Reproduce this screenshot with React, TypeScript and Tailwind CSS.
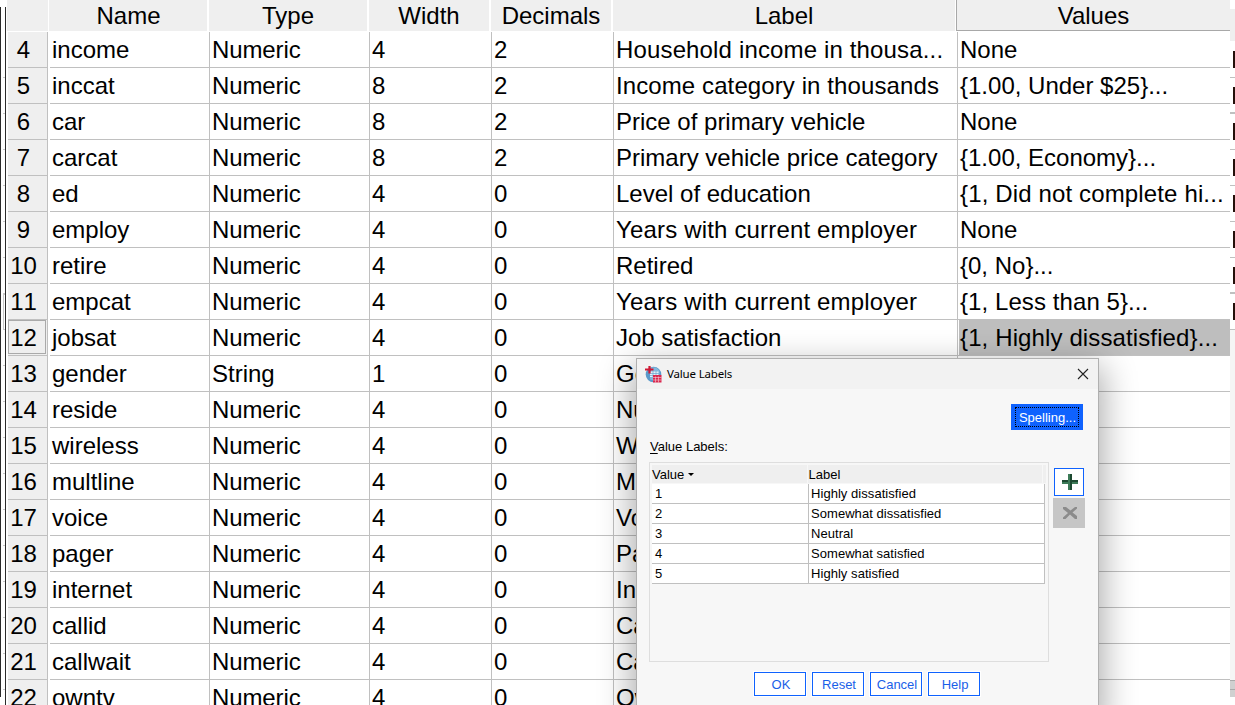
import React from "react";

type Row = [number, string, string, number, number, string, string];

const rows: Row[] = [
  [4, "income", "Numeric", 4, 2, "Household income in thousa...", "None"],
  [5, "inccat", "Numeric", 8, 2, "Income category in thousands", "{1.00, Under $25}..."],
  [6, "car", "Numeric", 8, 2, "Price of primary vehicle", "None"],
  [7, "carcat", "Numeric", 8, 2, "Primary vehicle price category", "{1.00, Economy}..."],
  [8, "ed", "Numeric", 4, 0, "Level of education", "{1, Did not complete hi..."],
  [9, "employ", "Numeric", 4, 0, "Years with current employer", "None"],
  [10, "retire", "Numeric", 4, 0, "Retired", "{0, No}..."],
  [11, "empcat", "Numeric", 4, 0, "Years with current employer", "{1, Less than 5}..."],
  [12, "jobsat", "Numeric", 4, 0, "Job satisfaction", "{1, Highly dissatisfied}..."],
  [13, "gender", "String", 1, 0, "Ge", ""],
  [14, "reside", "Numeric", 4, 0, "Nu", ""],
  [15, "wireless", "Numeric", 4, 0, "Wi", ""],
  [16, "multline", "Numeric", 4, 0, "Mu", ""],
  [17, "voice", "Numeric", 4, 0, "Vo", ""],
  [18, "pager", "Numeric", 4, 0, "Pa", ""],
  [19, "internet", "Numeric", 4, 0, "Int", ""],
  [20, "callid", "Numeric", 4, 0, "Ca", ""],
  [21, "callwait", "Numeric", 4, 0, "Ca", ""],
  [22, "owntv", "Numeric", 4, 0, "Ow", ""],
];

const tracking: Record<string, string> = {
  "Household income in thousa...": "tracking-[0.15px]",
  "Income category in thousands": "tracking-[0.1px]",
  "Years with current employer": "tracking-[0.17px]",
  "{1, Did not complete hi...": "tracking-[0.14px]",
  "{1, Highly dissatisfied}...": "tracking-[0.12px]",
  "{1, Less than 5}...": "tracking-[0.08px]",
  Numeric: "tracking-[-0.1px]",
};

const labels = ["Highly dissatisfied", "Somewhat dissatisfied", "Neutral", "Somewhat satisfied", "Highly satisfied"];

const grid = "grid grid-cols-[42px_159px_160px_122px_122px_344px_273px]";

function Header({ children }: { children?: React.ReactNode }) {
  return <div className="mr-0.5 h-[31px] overflow-hidden bg-[#efefef] text-center leading-[32px]">{children}</div>;
}

function Cell({ text, selected }: { text: string | number; selected?: boolean }) {
  return (
    <div
      className={
        "overflow-hidden whitespace-nowrap border-b border-l border-[#c0c0c0] leading-[35px] " +
        (tracking[text] ?? "")
      }
    >
      <div className={selected ? "ml-px bg-[#bebebe] pl-px" : "pl-0.5"}>{text}</div>
    </div>
  );
}

function DialogButton({ children }: { children: React.ReactNode }) {
  return (
    <button className="h-6 w-[52px] border border-[#0f62fe] bg-white pl-0.5 text-center leading-[23px] text-[#1a5fe8] outline outline-white">
      {children}
    </button>
  );
}

function AppIcon() {
  return (
    <svg width="17" height="17" viewBox="0 0 17 17">
      <circle cx="8.5" cy="8.5" r="7.8" fill="#5b9acb" />
      <path d="M6 1.500h5l3.500 3v4H9v6l-4-1z" fill="#82b8dd" />
      <path d="M5 5.500h8.500V11H5z" fill="#e4f0f8" />
      <path d="M5 7.500h9M5 9.500h9M8 5v6M11 5v6" stroke="#6aa4cf" strokeWidth=".7" />
      <path d="M4.500 0v7.500M0 3.500h8.500" stroke="#cf1834" strokeWidth="2.200" />
      <path d="M8 9h8.500v7.500H8z" fill="#d9274e" />
      <path d="M8 11.500h8.500M8 14h8.500M10.500 10.500v6M13.500 10.500v6" stroke="#f7ccd6" strokeWidth=".6" />
    </svg>
  );
}

function Dialog() {
  return (
    <div className="absolute left-[636px] top-[358px] h-[360px] w-[463px] border border-[#b0b0b0] bg-[#f7f7f7] text-[13px] text-black shadow-[0_12px_32px_4px_rgba(0,0,0,0.33)]">
      <div className="flex h-[30px] items-center bg-[#f2f2f2] pl-2 pr-[9px]">
        <AppIcon />
        <span className="ml-[5px] flex-1 font-['Noto_Sans',sans-serif] text-[11.500px] tracking-[-0.170px]">Value Labels</span>
        <svg width="12" height="12" viewBox="0 0 12 12" stroke="#222" strokeWidth="1.1">
          <path d="M1 1l10 10M11 1L1 11" />
        </svg>
      </div>
      <div className="flex justify-end pr-[15px] pt-[15px]">
        <button className="h-[26px] w-[72px] bg-[#0f62fe] px-1 py-[3px] text-white">
          <span className="flex h-5 items-center justify-center whitespace-nowrap border border-dotted border-black pl-px pt-px">Spelling...</span>
        </button>
      </div>
      <div className="ml-[13px] mt-[8px] leading-[18px]">
        <span className="underline underline-offset-2">V</span>alue Labels:
      </div>
      <div className="ml-3 mt-1.5 flex">
        <div className="h-[200px] w-[400px] border border-[#dedede] p-0.5">
          <div className="mb-px flex h-[18px] gap-px leading-[19px]">
            <div className="flex w-[155px] items-center bg-[#efefef]">
              Value
              <svg className="ml-1" width="6" height="3" viewBox="0 0 6 3">
                <path d="M0 0h6L3 3z" />
              </svg>
            </div>
            <div className="w-[235px] bg-[#efefef] pl-px">Label</div>
            <div className="w-[3px] bg-[#efefef]" />
          </div>
          {labels.map((label, i) => (
            <div key={label} className="flex h-5 w-[393px] border-b border-r border-[#c0c0c0] bg-white leading-[19px]">
              <div className="w-[156px] pl-[3px]">{i + 1}</div>
              <div className="flex-1 border-l border-[#c0c0c0] pl-0.5 tracking-[0.05px]">{label}</div>
            </div>
          ))}
        </div>
        <div className="ml-1 mt-1.5 flex flex-col items-center gap-0.5">
          <div className="grid h-7 w-[30px] place-items-center border border-[#0f62fe] bg-white pl-0.5">
            <svg width="16" height="16" viewBox="0 0 16 16">
              <path d="M6 0h4v6h6v4h-6v6H6v-6H0V6h6z" fill="#1c4931" />
              <path d="M6 0h2v16H6zM0 8h16v2H0z" fill="#3d7b58" />
              <path d="M8 0h2v16H8z" fill="#1c4931" />
            </svg>
          </div>
          <div className="grid h-[30px] w-8 place-items-center bg-[#c6c6c6] pl-0.5">
            <svg width="14" height="12" viewBox="0 0 14 12" fill="#8b8b8b">
              <path d="M0 0h3l4.500 3.500L12 0h2v1.500L9.500 5.500 14 9v3h-2L7 7.500 2.500 12H0v-1.500L5 6 0 2z" />
            </svg>
          </div>
        </div>
      </div>
      <div className="ml-[117px] flex gap-1.5 pt-[10px]">
        <DialogButton>OK</DialogButton>
        <DialogButton>Reset</DialogButton>
        <DialogButton>Cancel</DialogButton>
        <DialogButton>Help</DialogButton>
      </div>
    </div>
  );
}

export default function App() {
  return (
    <div className="relative flex h-[705px] w-[1235px] overflow-hidden bg-white font-['Liberation_Sans',Arial,sans-serif] text-[24px] text-black">
      <div className="mt-[7px] h-[690px] w-px shrink-0 bg-[#2a2a2a]" />
      <div className="flex w-[4px] shrink-0 flex-col">
        {rows.map((r) => (
          <div
            key={r[0]}
            className={
              "ml-0.5 h-9 shrink-0 border-b border-[#c8c8c8] first:mt-[42px] " +
              (r[0] === 11 ? "border-l border-t" : "")
            }
          />
        ))}
      </div>
      <div className="mt-[7px] h-[698px] w-px shrink-0 bg-[#2a2a2a]" />
      <div className="ml-0.5 w-[1222px] shrink-0">
        <div className={grid + " h-8"}>
          <div className="-ml-px mr-0.5 h-[31px] bg-[#efefef]" />
          <div className="-ml-px">
            <Header>
              <span className="pl-px">Name</span>
            </Header>
          </div>
          <Header>Type</Header>
          <Header>Width</Header>
          <Header>Decimals</Header>
          <Header>Label</Header>
          <div className="-ml-px h-[31px] overflow-hidden border-b border-l border-[#a8a8a8] bg-[#efefef] text-center leading-[32px]">
            Values
          </div>
        </div>
        {rows.map((r) => (
          <div key={r[0]} className={grid + " h-9"}>
            <div className="mr-0.5 border-b border-r border-[#c0c0c0] bg-[#efefef]">
              <div
                className={
                  "flex h-[34px] w-[38px] items-center justify-center pr-[7px] pt-0.5 [font-kerning:none] " +
                  (r[0] === 12 ? "border border-[#aaa]" : "border border-transparent")
                }
              >
                {r[0]}
              </div>
            </div>
            <div className="overflow-hidden border-b border-[#c0c0c0] pl-0.5 leading-[35px]">{r[1]}</div>
            <Cell text={r[2]} />
            <Cell text={r[3]} />
            <Cell text={r[4]} />
            <Cell text={r[5]} />
            <Cell text={r[6]} selected={r[0] === 12} />
          </div>
        ))}
      </div>
      <div className="w-[5px] shrink-0">
        <div className="mb-px mt-[9px] h-8 bg-[#efefef]" />
        {rows.slice(0, 8).map((r) => (
          <div
            key={r[0]}
            className={
              "flex h-9 items-center justify-end border-[#c0c0c0] " +
              (r[0] === 5 || r[0] === 10 ? "border-b-2" : "border-b")
            }
          >
            <div className="h-[17px] w-0.5 bg-[#24100a]" />
          </div>
        ))}
        <div className="h-[350px] bg-[#f5f5f5]" />
        <div className="h-[9px] border-t border-[#aaa] bg-[#d0d0d0]" />
        <div className="h-2 border-t border-[#aaa] bg-[#d0d0d0]" />
      </div>
      <Dialog />
    </div>
  );
}
